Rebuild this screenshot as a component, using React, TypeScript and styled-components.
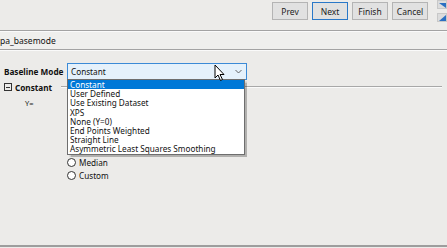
import React from "react";
import styled, { createGlobalStyle } from "styled-components";

const Global = createGlobalStyle`
  html, body { margin: 0; padding: 0; background: #ecebe9; }
  body { font-family: "Noto Sans", "Open Sans", sans-serif; font-size: 8.2px; color: #000; }
  #root { width: 447px; height: 248px; overflow: hidden; }
`;

const Page = styled.div`
  width: 447px;
  height: 248px;
  position: relative;
  display: flex;
  flex-direction: column;
  background: #ecebe9;
`;

const TopBar = styled.div`
  height: 30px;
  display: flex;
  justify-content: flex-end;
  align-items: flex-start;
  padding-top: 2px;
  box-sizing: border-box;
  gap: 4px;
`;

const Btn = styled.button<{ $primary?: boolean }>`
  width: 36px;
  height: 18px;
  box-sizing: border-box;
  background: #e1e1e1;
  border: ${p => (p.$primary ? "1.5px solid #2a78c8" : "1px solid #b4b4b4")};
  font-family: inherit;
  font-size: 8.5px;
  color: #222;
  padding: 0;
  margin: 0;
`;

const ArrowCol = styled.div`
  display: flex;
  flex-direction: column;
  gap: 4px;
  margin-top: -2px;
  margin-left: 5px;
  width: 10px;
`;

const ArrowBtn = styled.div`
  height: 9px;
  width: 10px;
  background: #dcdcdc;
  border: 1px solid #c8c8c8;
  box-sizing: border-box;
  display: flex;
  align-items: center;
  justify-content: flex-end;
`;

const Rule = styled.div`
  height: 1px;
  background: #a3a3a3;
  border-bottom: 1px solid #fafafa;
`;

const TitleRow = styled.div`
  height: 17px;
  display: flex;
  align-items: center;
  font-size: 8.5px;
  color: #111;
  background: #efefed;
`;

const Content = styled.div`
  flex: 1;
  display: flex;
  flex-direction: column;
  padding: 11px 0 0 4px;
  position: relative;
`;

const FormRow = styled.div`
  display: flex;
  align-items: center;
  gap: 4px;
  height: 18px;
`;

const Label = styled.span`
  font-weight: 700;
  width: 59px;
  white-space: nowrap;
  color: #111;
`;

const Combo = styled.div`
  width: 180px;
  height: 17px;
  box-sizing: border-box;
  background: #e5f1fb;
  border: 1px solid #3c8ad6;
  display: flex;
  align-items: center;
  justify-content: space-between;
  padding: 0 4px 0 3px;
  color: #111;
`;

const GroupHeader = styled.div`
  display: flex;
  align-items: center;
  height: 10px;
  margin-top: 2px;
  gap: 3px;
`;

const ToggleBox = styled.div`
  width: 8px;
  height: 8px;
  box-sizing: border-box;
  border: 1px solid #333;
  position: relative;
  &::after {
    content: "";
    position: absolute;
    left: 1px;
    right: 1px;
    top: 2.5px;
    height: 1px;
    background: #333;
  }
`;

const GroupTitle = styled.span`
  font-weight: 700;
  color: #111;
`;

const GroupLine = styled.div`
  flex: 1;
  height: 1px;
  background: #a8a8a8;
  border-bottom: 1px solid #fafafa;
  margin: 0 5px 0 6px;
`;

const YLabel = styled.div`
  margin: 6px 0 0 21px;
  font-size: 7.5px;
  color: #222;
`;

const Radios = styled.div`
  display: flex;
  flex-direction: column;
  gap: 3px;
  margin: 49px 0 0 63px;
`;

const RadioRow = styled.label`
  display: flex;
  align-items: center;
  gap: 3px;
  height: 10px;
  color: #111;
`;

const RadioCircle = styled.span`
  width: 9px;
  height: 9px;
  box-sizing: border-box;
  border: 1px solid #333;
  border-radius: 50%;
  background: #fff;
`;

const BottomRule = styled.div`
  height: 2px;
  background: #9d9d9d;
  margin-bottom: 1px;
`;

const List = styled.div`
  position: absolute;
  left: 67px;
  top: 28px;
  width: 178px;
  box-sizing: border-box;
  background: #fff;
  border: 1px solid #6e6e6e;
  box-shadow: 1.5px 1.5px 1px rgba(0, 0, 0, 0.25);
`;

const Item = styled.div<{ $sel?: boolean }>`
  height: 9.2px;
  line-height: 9.2px;
  padding-left: 2px;
  white-space: nowrap;
  background: ${p => (p.$sel ? "#0078d7" : "transparent")};
  color: ${p => (p.$sel ? "#fff" : "#111")};
`;

const Cursor = styled.svg`
  position: absolute;
  left: 214px;
  top: 64px;
`;

const items = [
  "Constant",
  "User Defined",
  "Use Existing Dataset",
  "XPS",
  "None (Y=0)",
  "End Points Weighted",
  "Straight Line",
  "Asymmetric Least Squares Smoothing",
];

export default function App() {
  return (
    <Page>
      <Global />
      <TopBar>
        <Btn>Prev</Btn>
        <Btn $primary>Next</Btn>
        <Btn>Finish</Btn>
        <Btn>Cancel</Btn>
        <ArrowCol>
          <ArrowBtn>
            <svg width="7" height="6" viewBox="0 0 7 6"><path d="M0 1 L7 1 L7 6 Z" fill="#2b6fc2" /></svg>
          </ArrowBtn>
          <ArrowBtn>
            <svg width="7" height="6" viewBox="0 0 7 6"><path d="M0 6 L7 0 L7 6 Z" fill="#2b6fc2" /></svg>
          </ArrowBtn>
        </ArrowCol>
      </TopBar>
      <Rule />
      <TitleRow>pa_basemode</TitleRow>
      <Rule />
      <Content>
        <FormRow>
          <Label>Baseline Mode</Label>
          <Combo>
            <span>Constant</span>
            <svg width="7" height="5" viewBox="0 0 7 5">
              <path d="M0.5 1 L3.5 4 L6.5 1" fill="none" stroke="#555" strokeWidth="0.9" />
            </svg>
          </Combo>
        </FormRow>
        <GroupHeader>
          <ToggleBox />
          <GroupTitle>Constant</GroupTitle>
          <GroupLine />
        </GroupHeader>
        <YLabel>Y=</YLabel>
        <Radios>
          <RadioRow><RadioCircle />Median</RadioRow>
          <RadioRow><RadioCircle />Custom</RadioRow>
        </Radios>
        <List>
          {items.map((t, i) => (
            <Item key={t} $sel={i === 0}>{t}</Item>
          ))}
        </List>
      </Content>
      <BottomRule />
      <Cursor width="12" height="18" viewBox="0 0 12 18">
        <path d="M1 1 L1 14 L4 11 L6.5 16.5 L8.5 15.5 L6 10.5 L10 10.5 Z" fill="#fff" stroke="#000" strokeWidth="1" strokeLinejoin="round" />
      </Cursor>
    </Page>
  );
}
